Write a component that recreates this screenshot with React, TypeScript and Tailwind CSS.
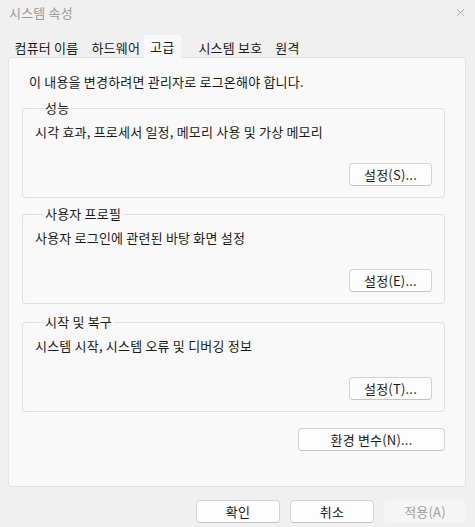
import { X } from "lucide-react";

const FONT = {
  fontFamily: '"Noto Sans CJK KR", "Noto Sans", sans-serif',
};

function DlgButton({
  label,
  width = "w-[83px]",
  disabled = false,
}: {
  label: string;
  width?: string;
  disabled?: boolean;
}) {
  if (disabled) {
    return (
      <div
        className={`${width} h-[23px] flex items-center justify-center rounded-[4px] bg-[#f5f5f5] text-[#a0a0a0] text-[13px] leading-[16px]`}
      >
        {label}
      </div>
    );
  }
  return (
    <div
      className={`${width} h-[23px] flex items-center justify-center rounded-[4px] border border-[#d4d4d4] border-b-[#c4c4c4] bg-[#fdfdfd] text-[13px] leading-[16px] text-[#1b1b1b]`}
    >
      {label}
    </div>
  );
}

function GroupBox({
  title,
  desc,
  button,
  className = "",
}: {
  title: string;
  desc: string;
  button: string;
  className?: string;
}) {
  return (
    <fieldset
      className={`border border-[#e0e0e0] rounded-[3px] px-[12px] pb-[11px] ${className}`}
    >
      <legend className="ml-[8px] px-[2px] leading-[16px] text-[13px] text-[#1b1b1b]">
        {title}
      </legend>
      <div className="pt-[8px] leading-[16px] text-[13px] text-[#1b1b1b]">
        {desc}
      </div>
      <div className="mt-[23px] flex justify-end">
        <DlgButton label={button} />
      </div>
    </fieldset>
  );
}

const tabs = ["컴퓨터 이름", "하드웨어", "고급", "시스템 보호", "원격"];

export default function App() {
  return (
    <div
      className="w-[475px] h-[527px] bg-[#f0f0f0] flex flex-col overflow-hidden text-[#1b1b1b] tracking-[0.2px]"
      style={FONT}
    >
      {/* title bar */}
      <div className="h-[35px] flex items-start justify-between pl-[9px] pr-[8px] pt-[5px]">
        <span className="text-[13px] leading-[16px] text-[#9a9a9a]">
          시스템 속성
        </span>
        <X size={13} strokeWidth={1.2} className="text-[#8c8c8c] mt-[1px]" />
      </div>

      {/* tabs */}
      <div className="flex h-[22px] pl-[8px]">
        {tabs.map((t) =>
          t === "고급" ? (
            <div
              key={t}
              className="relative z-10 h-[23px] px-[6.5px] pt-[4px] bg-[#f9f9f9] rounded-t-[3px] text-[13px] leading-[16px]"
            >
              {t}
            </div>
          ) : (
            <div
              key={t}
              className={`h-[22px] px-[6.5px] pt-[5px] text-[13px] leading-[16px] ${
                t === "시스템 보호" ? "ml-[11px]" : ""
              } ${t === "하드웨어" ? "pr-[3.5px]" : ""}`}
            >
              {t}
            </div>
          )
        )}
      </div>

      {/* panel */}
      <div className="ml-[8px] mr-[9px] h-[430px] border border-[#e3e3e3] rounded-[3px] bg-[#f9f9f9] pl-[13px] pr-[20px] pt-[16px]">
        <div className="pl-[7px] text-[13px] leading-[16px]">
          이 내용을 변경하려면 관리자로 로그온해야 합니다.
        </div>
        <GroupBox
          className="mt-[10px]"
          title="성능"
          desc="시각 효과, 프로세서 일정, 메모리 사용 및 가상 메모리"
          button="설정(S)..."
        />
        <GroupBox
          className="mt-[8px]"
          title="사용자 프로필"
          desc="사용자 로그인에 관련된 바탕 화면 설정"
          button="설정(E)..."
        />
        <GroupBox
          className="mt-[10px]"
          title="시작 및 복구"
          desc="시스템 시작, 시스템 오류 및 디버깅 정보"
          button="설정(T)..."
        />
        <div className="mt-[16px] flex justify-end">
          <DlgButton label="환경 변수(N)..." width="w-[147px]" />
        </div>
      </div>

      {/* footer */}
      <div className="flex justify-end gap-[10px] pr-[9px] mt-[13px]">
        <DlgButton label="확인" width="w-[84px]" />
        <DlgButton label="취소" width="w-[84px]" />
        <DlgButton label="적용(A)" width="w-[82px]" disabled />
      </div>
    </div>
  );
}
